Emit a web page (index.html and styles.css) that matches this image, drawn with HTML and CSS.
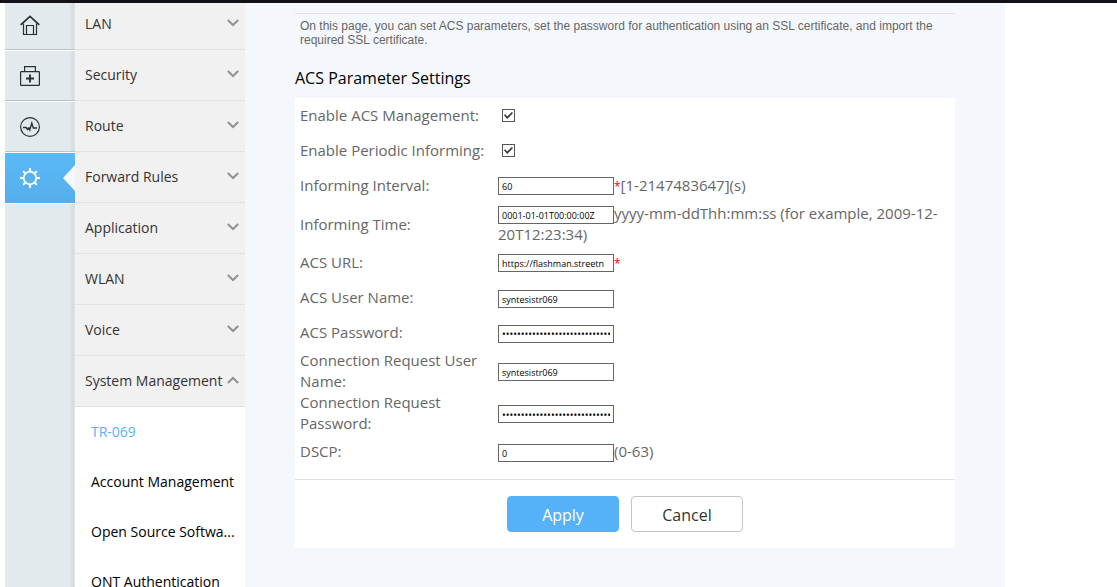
FILE: index.html
```html
<!DOCTYPE html>
<html lang="en">
<head>
<meta charset="utf-8">
<title>TR-069</title>
<link rel="stylesheet" href="styles.css">
</head>
<body>
<div class="topbar"></div>
<div class="shell">
  <nav class="rail" aria-label="Sections">
    <a class="rail-item" href="#" aria-label="Home">
      <svg class="rail-icon" viewBox="0 0 20 20" fill="none" stroke="#263035"><path d="M.7 9.8 10 1.4l9.3 8.4" stroke-width="1.7"/><path d="M3.5 8.5v11h13v-11M6.500 19v-8.500h7V19" stroke-width="1.200"/></svg>
    </a>
    <a class="rail-item" href="#" aria-label="Tools">
      <svg class="rail-icon" viewBox="0 0 20 20" fill="none" stroke="#263035"><rect x=".6" y="5.600" width="18.800" height="13.800" rx=".6" stroke-width="1.200"/><path d="M4.600 5.500V.6h10.800v4.900" stroke-width="1.200"/><path d="M10 8.500v8M6 12.500h8" stroke-width="1.900"/></svg>
    </a>
    <a class="rail-item" href="#" aria-label="Diagnosis">
      <svg class="rail-icon" viewBox="0 0 20 20" fill="none" stroke="#263035"><circle cx="10" cy="10" r="9.400" stroke-width="1.200"/><path d="M3 10.500h3l1.500 2 1.500-1.500.8 2L11.800 6l1.500 5h3.700" stroke-width="1.300"/><path d="M6.500 10.500 9 13l1-2z" fill="#263035" stroke="none"/></svg>
    </a>
    <a class="rail-item rail-active" href="#" aria-label="Advanced">
      <svg class="rail-icon" viewBox="0 0 20 20" fill="none" stroke="#fff" stroke-width="2"><circle cx="10" cy="10" r="6.300" stroke-width="1.700"/><path d="M10 0v3.500M10 16.500V20M0 10h3.500M16.500 10H20M3.200 3.200l2.200 2.200M14.600 14.600l2.200 2.200M3.200 16.800l2.200-2.200M14.600 5.400l2.200-2.200"/></svg>
    </a>
  </nav>
  <nav class="menu" aria-label="Advanced settings">
    <a class="menu-item" href="#">LAN<svg class="chevron" viewBox="0 0 12 8"><path d="m.8 1 5.200 5 5.200-5"/></svg></a>
    <a class="menu-item" href="#">Security<svg class="chevron" viewBox="0 0 12 8"><path d="m.8 1 5.200 5 5.200-5"/></svg></a>
    <a class="menu-item" href="#">Route<svg class="chevron" viewBox="0 0 12 8"><path d="m.8 1 5.200 5 5.200-5"/></svg></a>
    <a class="menu-item" href="#">Forward Rules<svg class="chevron" viewBox="0 0 12 8"><path d="m.8 1 5.200 5 5.200-5"/></svg></a>
    <a class="menu-item" href="#">Application<svg class="chevron" viewBox="0 0 12 8"><path d="m.8 1 5.200 5 5.200-5"/></svg></a>
    <a class="menu-item" href="#">WLAN<svg class="chevron" viewBox="0 0 12 8"><path d="m.8 1 5.200 5 5.200-5"/></svg></a>
    <a class="menu-item" href="#">Voice<svg class="chevron" viewBox="0 0 12 8"><path d="m.8 1 5.200 5 5.200-5"/></svg></a>
    <a class="menu-item" href="#">System Management<svg class="chevron" viewBox="0 0 12 8"><path d="m.8 7 5.200-5 5.200 5"/></svg></a>
    <a class="sub-item sub-active" href="#">TR-069</a>
    <a class="sub-item" href="#">Account Management</a>
    <a class="sub-item" href="#">Open Source Softwa...</a>
    <a class="sub-item" href="#">ONT Authentication</a>
  </nav>
  <main class="content">
    <p class="summary">On this page, you can set ACS parameters, set the password for authentication using an SSL certificate, and import the required SSL certificate.</p>
    <h1 class="heading">ACS Parameter Settings</h1>
    <form class="panel">
      <div class="fields">
        <div class="row"><label class="label" for="acs">Enable ACS Management:</label><div class="value"><input class="check" type="checkbox" id="acs" checked></div></div>
        <div class="row"><label class="label" for="periodic">Enable Periodic Informing:</label><div class="value"><input class="check" type="checkbox" id="periodic" checked></div></div>
        <div class="row"><label class="label" for="interval">Informing Interval:</label><div class="value"><input class="text" type="text" id="interval" value="60"><span class="required">*</span>[1-2147483647](s)</div></div>
        <div class="row"><label class="label" for="time">Informing Time:</label><div class="value"><input class="text" type="text" id="time" value="0001-01-01T00:00:00Z">yyyy-mm-ddThh:mm:ss (for example, 2009-12-20T12:23:34)</div></div>
        <div class="row"><label class="label" for="url">ACS URL:</label><div class="value"><input class="text" type="text" id="url" value="https://flashman.streetn"><span class="required">*</span></div></div>
        <div class="row"><label class="label" for="user">ACS User Name:</label><div class="value"><input class="text" type="text" id="user" value="syntesistr069"></div></div>
        <div class="row"><label class="label" for="pass">ACS Password:</label><div class="value"><input class="text" type="password" id="pass" value="********************************"></div></div>
        <div class="row"><label class="label" for="cuser">Connection Request User Name:</label><div class="value"><input class="text" type="text" id="cuser" value="syntesistr069"></div></div>
        <div class="row"><label class="label" for="cpass">Connection Request Password:</label><div class="value"><input class="text" type="password" id="cpass" value="********************************"></div></div>
        <div class="row"><label class="label" for="dscp">DSCP:</label><div class="value"><input class="text" type="text" id="dscp" value="0">(0-63)</div></div>
      </div>
      <div class="actions"><button class="button primary" type="button">Apply</button><button class="button" type="button">Cancel</button></div>
    </form>
  </main>
</div>
</body>
</html>
```
FILE: styles.css
```css
* { box-sizing: border-box; }
html { height: 100%; }
body {
  height: 100%;
  margin: 0;
  display: flex;
  flex-direction: column;
  overflow: hidden;
  background: #fff;
  font-family: "Open Sans", "Noto Sans", sans-serif;
}
a { color: inherit; text-decoration: none; }
.topbar { flex: none; height: 3px; background: #121118; }
.shell {
  flex: 1;
  min-height: 0;
  overflow: hidden;
  display: flex;
  max-width: 1005px;
  padding-left: 5px;
}
.rail {
  flex: none;
  width: 70px;
  background: linear-gradient(to right, #e3eaee 64px, #d3dadd 69px, #e8ebec 70px);
}
/* The menus are scrolled slightly under the top bar. */
.rail { margin-top: -3px; }
.menu { margin-top: -4px; }
.rail-item {
  position: relative;
  display: flex;
  align-items: center;
  height: 51px;
  padding-left: 15px;
  border-bottom: 1px solid #fff;
  box-shadow: inset 0 -1px #b9c5cc;
}
.rail-icon { width: 20px; height: 20px; }
.rail-active {
  background: linear-gradient(#5bb9f7, #55aeeb);
  box-shadow: none;
}
.rail-active::after {
  content: "";
  position: absolute;
  right: 0;
  top: 12px;
  width: 12px;
  height: 26px;
  background: #f4f9fd;
  clip-path: polygon(100% 0, 0 50%, 100% 100%);
}
.menu {
  flex: none;
  width: 170px;
  background: #fff;
  font-size: 14px;
}
.menu-item {
  display: flex;
  align-items: center;
  justify-content: space-between;
  height: 51px;
  padding: 0 6px 2px 10px;
  border-bottom: 1px solid #e1e1e1;
  background: #f1f1f1;
  color: #333;
}
.chevron {
  width: 12px;
  height: 8px;
  fill: none;
  stroke: #929292;
  stroke-width: 2;
}
.sub-item {
  display: block;
  padding-left: 16px;
  line-height: 50px;
  white-space: nowrap;
  color: #000;
}
.sub-active { color: #56b2f8; }
.content {
  flex: 1;
  min-width: 0;
  padding: 10px 50px;
  background: #f4f8fd;
}
.summary {
  margin: 0;
  padding: 5px;
  border-top: 1px solid #dfe2e6;
  font: 12px/14px "Liberation Sans", Arial, sans-serif;
  color: #666;
}
.heading {
  margin: 14px 0 8px;
  font-size: 16px;
  line-height: 24px;
  font-weight: 400;
  color: #000;
}
.panel {
  background: #fff;
  color: #666;
  font-size: 15px;
  line-height: 21px;
}
.fields { padding-bottom: 10px; }
.row {
  display: grid;
  grid-template-columns: 30% 1fr;
  align-items: center;
  min-height: 35px;
}
.label { padding-left: 5px; }
.value { padding: 0 5px; }
.text {
  width: 116px;
  height: 18px;
  margin: 0;
  padding: 1px 3px 0;
  border: 1px solid #666;
  border-radius: 0;
  background: #fff;
  color: #000;
  font: 9px "Open Sans", "Noto Sans", sans-serif;
  vertical-align: middle;
}
.text[type="password"] { font-size: 10px; }
.required { color: #f00; font-size: 12px; }
.check {
  appearance: none;
  display: grid;
  place-items: center;
  width: 13px;
  height: 13px;
  margin: 0 4px;
  border: 1px solid #555;
  background: #fff;
}
.check:checked::after {
  content: "";
  width: 9px;
  height: 7px;
  background: #333;
  clip-path: polygon(0 45%, 12% 32%, 36% 65%, 88% 0, 100% 14%, 36% 100%);
}
.actions {
  display: flex;
  justify-content: center;
  gap: 12px;
  padding: 16px;
  border-top: 1px solid #e2e2e2;
}
.button {
  width: 112px;
  height: 36px;
  padding: 1px 0 0;
  border: 1px solid #c4c4c4;
  border-radius: 4px;
  background: #fff;
  color: #333;
  font: 16px "Open Sans", "Noto Sans", sans-serif;
}
.primary { border-color: #56b2f8; background: #56b2f8; color: #fff; }
```
